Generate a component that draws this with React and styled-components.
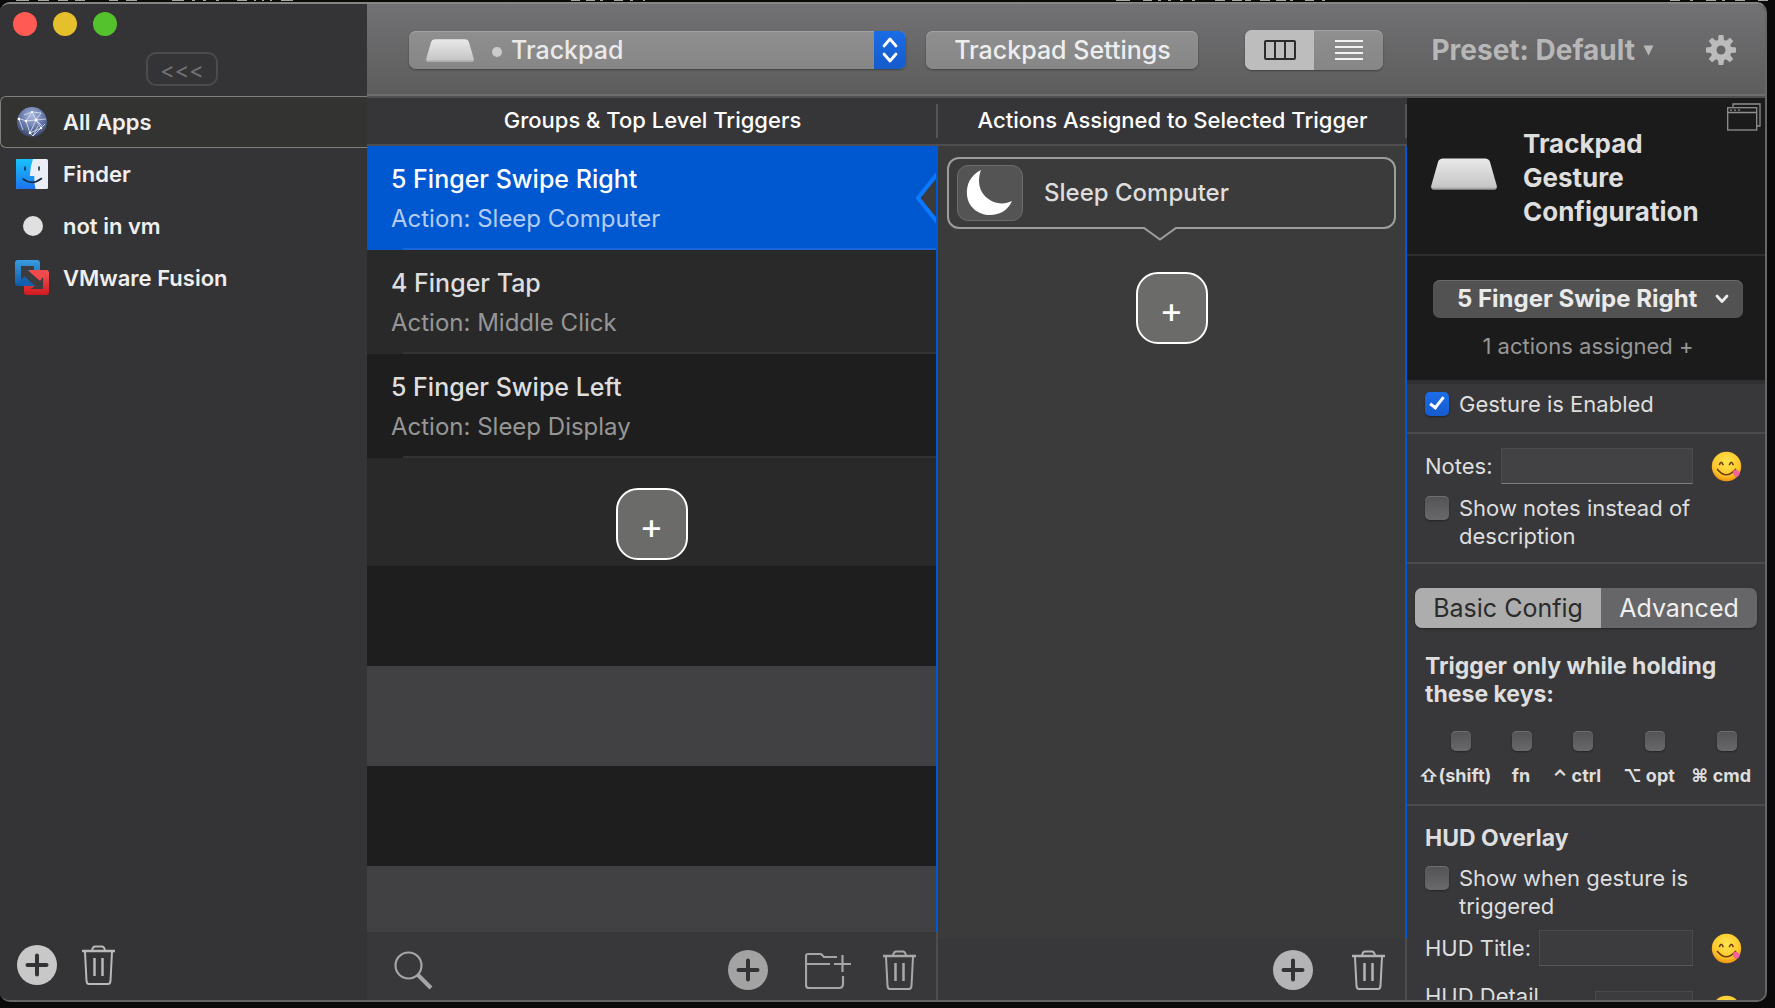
import React from "react";
import styled, { createGlobalStyle, css } from "styled-components";

const Global = createGlobalStyle`
  *, *::before, *::after { box-sizing: border-box; }
  body {
    margin: 0;
    background: #0a0a0a;
    color: #dedede;
    font-family: Inter, "DejaVu Sans", sans-serif;
    font-size: 22px;
    line-height: 28px;
    overflow: hidden;
  }
  button, input, select { font: inherit; color: inherit; margin: 0; }
  button { border: 0; padding: 0; background: none; }
  h2, h3, ul, p { margin: 0; padding: 0; font-size: inherit; font-weight: inherit; }
  ul { list-style: none; }
  svg { display: block; flex: none; }
`;

/* ---------- shell ---------- */

const Desktop = styled.div`
  height: 100vh;
  display: flex;
  flex-direction: column;
  padding-bottom: 6px;
`;

const Backdrop = styled.svg`
  width: 100%;
  height: 2px;
`;

const Window = styled.div`
  flex: 1;
  min-height: 0;
  margin-right: 8px;
  display: flex;
  border: solid #666668;
  border-width: 2px 2px 2px 0;
  border-top-color: #858583;
  border-radius: 10px;
  overflow: hidden;
  background: #373739;
`;

const Main = styled.main`
  flex: 1;
  min-width: 0;
  display: flex;
  flex-direction: column;
`;

const Columns = styled.div`
  flex: 1;
  min-height: 0;
  display: grid;
  grid-template-columns: minmax(0, 571fr) minmax(0, 469fr) 358px;
`;

/* ---------- sidebar ---------- */

const Sidebar = styled.aside`
  width: 367px;
  flex: none;
  display: flex;
  flex-direction: column;
  background: #343436;
`;

const TitleBar = styled.div`
  height: 92px;
  padding: 8px 3px 0 0;
`;

const Lights = styled.div`
  display: flex;
  gap: 16px;
  padding-left: 13px;
`;

const Light = styled.button`
  width: 24px;
  height: 24px;
  border-radius: 50%;
  background: ${(p) => p.$color};
`;

const CollapseButton = styled.button`
  display: block;
  width: 72px;
  height: 34px;
  margin: 16px auto 0;
  border: 2px solid #4b4b4d;
  border-radius: 10px;
  color: #747476;
  font-size: 22px;
  line-height: 32px;
`;

const AppRow = styled.button`
  display: flex;
  align-items: center;
  gap: 15px;
  width: 100%;
  height: 52px;
  padding-left: 15px;
  text-align: left;
  font-weight: 600;
  color: #efefef;
  border: 1px solid transparent;
  border-right: 0;
  border-radius: 6px 0 0 6px;
  ${(p) =>
    p.$selected &&
    css`
      border-color: #808082;
      background: #333332;
    `}
`;

const AppIcon = styled.span`
  width: 32px;
  display: flex;
  justify-content: center;
`;

const SidebarFooter = styled.footer`
  margin-top: auto;
  display: flex;
  align-items: center;
  gap: 25px;
  height: 70px;
  padding-left: 17px;
`;

/* ---------- toolbar ---------- */

const Toolbar = styled.header`
  display: flex;
  align-items: center;
  height: 94px;
  padding: 0 29px 0 42px;
  background: linear-gradient(#727274, #5c5c5d);
  border-bottom: 2px solid #4f4f51;
  box-shadow: inset 0 -2px #6e6e70;
`;

const raised = css`
  background: linear-gradient(#8f8f8f, #868686);
  box-shadow: 0 1px 2px rgba(0, 0, 0, 0.35), inset 0 1px #a3a3a3;
  border-radius: 7px;
`;

const DevicePicker = styled.label`
  ${raised}
  flex: 1;
  min-width: 0;
  height: 38px;
  display: flex;
  align-items: center;
  padding-left: 17px;
  overflow: hidden;
  color: #eaeaea;
`;

const Dot = styled.span`
  width: 10px;
  height: 10px;
  margin: 4px 9px 0 18px;
  border-radius: 50%;
  background: #cbcbcb;
`;

const BareSelect = styled.select`
  appearance: none;
  flex: 1;
  min-width: 0;
  height: 100%;
  border: 0;
  padding: 0;
  background: transparent;
  font-size: ${(p) => p.$size}px;
  font-weight: ${(p) => p.$weight};
`;

const Stepper = styled.span`
  width: 32px;
  height: 100%;
  display: flex;
  align-items: center;
  justify-content: center;
  background: linear-gradient(#1a6ce6, #155bcb);
`;

const SettingsButton = styled.button`
  ${raised}
  width: 272px;
  height: 38px;
  margin: 0 47px 0 20px;
  font-size: 25px;
  font-weight: 500;
  color: #eeeeee;
`;

const ViewSwitch = styled.div`
  ${raised}
  display: flex;
  width: 138px;
  height: 40px;
  overflow: hidden;
`;

const ViewButton = styled.button`
  flex: 1;
  display: flex;
  align-items: center;
  justify-content: center;
  background: ${(p) => (p.$on ? "#bdbdbd" : "transparent")};
`;

const PresetButton = styled.button`
  display: flex;
  align-items: center;
  gap: 8px;
  margin: 0 52px 0 48px;
  font-size: 28px;
  font-weight: 700;
  color: #b7b7b7;
`;

/* ---------- shared column parts ---------- */

const Column = styled.section`
  min-height: 0;
  display: flex;
  flex-direction: column;
`;

const ColumnTitle = styled.h2`
  position: relative;
  height: 48px;
  border-bottom: 2px solid #4e4e50;
  text-align: center;
  line-height: 44px;
  font-weight: 500;
  color: #ffffff;
  white-space: nowrap;
  background: #363638;
  &::after {
    content: "";
    position: absolute;
    right: 0;
    top: 6px;
    bottom: 6px;
    width: 2px;
    background: #555557;
  }
`;

const ColumnBody = styled.div`
  flex: 1;
  min-height: 0;
  overflow: hidden;
  border-right: 2px solid #0059d4;
  background: ${(p) => p.$bg};
`;

const ColumnFooter = styled.footer`
  flex: none;
  height: ${(p) => p.$height}px;
  display: flex;
  align-items: flex-end;
  padding: 0 20px 10px 27px;
  border-right: 2px solid #4d4d4f;
  background: #38383a;
`;

const IconButton = styled.button`
  margin-left: ${(p) => (p.$push ? "auto" : `${p.$before || 0}px`)};
`;

const AddButton = styled.button`
  display: block;
  width: 72px;
  height: 72px;
  margin: ${(p) => p.$top}px auto 0;
  border: 2px solid #ffffff;
  border-radius: 22px;
  background: #6b6b69;
  color: #ffffff;
  font-size: 36px;
  line-height: 72px;
`;

/* ---------- trigger list ---------- */

const Trigger = styled.button`
  position: relative;
  display: block;
  width: calc(100% + 2px);
  height: 104px;
  padding: 13px 0 11px 24px;
  text-align: left;
  line-height: 40px;
  background: ${(p) => p.$bg};
  border-right: 2px solid ${(p) => (p.$selected ? "#0a78ff" : "#0059d4")};
  &::after {
    content: "";
    position: absolute;
    left: 36px;
    right: 0;
    bottom: 0;
    height: 2px;
    background: ${(p) => (p.$selected ? "#1a66d8" : "#333335")};
  }
`;

const TriggerName = styled.span`
  display: block;
  font-size: 25px;
  font-weight: 500;
  color: ${(p) => (p.$selected ? "#ffffff" : "#dedede")};
`;

const TriggerAction = styled.span`
  display: block;
  font-size: 24px;
  color: ${(p) => (p.$selected ? "#b4cbf0" : "#969696")};
`;

const Notch = styled.svg`
  position: absolute;
  right: -2px;
  top: 26px;
`;

const Stripe = styled.li`
  height: ${(p) => p.$height}px;
  background: ${(p) => p.$bg};
  overflow: hidden;
`;

/* ---------- action list ---------- */

const ActionCard = styled.button`
  position: relative;
  display: flex;
  align-items: center;
  gap: 21px;
  width: calc(100% - 18px);
  height: 72px;
  margin: 11px 9px 0;
  padding-left: 8px;
  border: 2px solid #9d9d9f;
  border-radius: 12px;
  font-size: 24px;
  font-weight: 500;
`;

const ActionIcon = styled.span`
  width: 66px;
  height: 56px;
  display: flex;
  align-items: center;
  justify-content: center;
  border: 1px solid #6c6c6c;
  border-radius: 11px;
  background: #545454;
`;

const Pointer = styled.svg`
  position: absolute;
  left: calc(50% - 29px);
  top: 68px;
`;

/* ---------- configuration ---------- */

const Config = styled.section`
  min-height: 0;
  overflow: hidden;
  background: #38383a;
`;

const ConfigHead = styled.header`
  position: relative;
  display: flex;
  align-items: center;
  gap: 26px;
  height: 158px;
  padding: 0 58px 4px 24px;
  border-bottom: 2px solid #2e2e2e;
  background: #1b1b1b;
`;

const ConfigTitle = styled.h2`
  padding-top: 8px;
  font-size: 26px;
  line-height: 34px;
  font-weight: 700;
`;

const DetachButton = styled.button`
  position: absolute;
  right: 4px;
  top: 5px;
`;

const GestureBox = styled.div`
  padding: 24px 22px 20px 26px;
  border-bottom: 4px solid #303032;
  background: #1b1b1b;
`;

const GesturePicker = styled.label`
  display: flex;
  align-items: center;
  height: 38px;
  padding: 0 14px 0 24px;
  border-radius: 7px;
  background: #525252;
  box-shadow: inset 0 1px #6a6a6a;
  color: #eaeaea;
`;

const Assigned = styled.p`
  margin-top: 14px;
  text-align: center;
  color: #979797;
`;

const Section = styled.div`
  padding: ${(p) => p.$pad};
  border-bottom: 2px solid #4b4b4d;
`;

const CheckLabel = styled.label`
  display: flex;
  gap: 10px;
  margin-top: ${(p) => p.$top || 0}px;
  padding: 0 40px 0 18px;
`;

const Check = styled.input`
  appearance: none;
  flex: none;
  width: ${(p) => p.$size}px;
  height: ${(p) => p.$size}px;
  margin: 2px 0 0;
  border-radius: 5px;
  background: linear-gradient(#535355, #69696b);
  box-shadow: 0 1px 2px rgba(0, 0, 0, 0.35), inset 0 1px #6e6e70;
  &:checked {
    background: linear-gradient(#1b6dea, #165bcc);
    box-shadow: 0 1px 2px rgba(0, 0, 0, 0.4);
  }
  &:checked::after {
    content: "";
    display: block;
    width: 8px;
    height: 15px;
    margin: 2px 0 0 8px;
    border: solid #ffffff;
    border-width: 0 3px 3px 0;
    transform: rotate(38deg);
  }
`;

const FieldRow = styled.div`
  display: flex;
  align-items: ${(p) => p.$align || "center"};
  height: 36px;
  margin-top: ${(p) => p.$top || 0}px;
  padding: 0 23px 0 18px;
`;

const FieldLabel = styled.label`
  flex: none;
  min-width: ${(p) => p.$min || 0}px;
  margin-right: 8px;
`;

const Field = styled.input`
  flex: 1;
  min-width: 0;
  height: 36px;
  padding: 0 8px;
  border: 1px solid #4a4a4c;
  border-bottom: 1px solid ${(p) => (p.$lit ? "#7e7e80" : "#58585a")};
  background: ${(p) => (p.$lit ? "#424244" : "#3c3c3e")};
`;

const EmojiButton = styled.button`
  margin-left: 18px;
`;

const TallFieldRow = styled(FieldRow)`
  ${Field} { margin-top: 9px; }
  ${EmojiButton} { margin-top: 13px; }
`;

const Tabs = styled.div`
  display: flex;
  height: 40px;
  margin: 0 8px;
  border-radius: 7px;
  overflow: hidden;
  background: #666668;
  box-shadow: 0 1px 2px rgba(0, 0, 0, 0.4);
`;

const Tab = styled.button`
  flex: ${(p) => p.$grow};
  font-size: 25px;
  color: ${(p) => (p.$on ? "#2b2b2b" : "#efefef")};
  background: ${(p) => (p.$on ? "#adadad" : "transparent")};
`;

const Heading = styled.h3`
  margin-top: ${(p) => p.$top || 0}px;
  padding: 0 40px 0 18px;
  font-size: 23px;
  font-weight: 700;
`;

const Keys = styled.div`
  display: grid;
  grid-template-columns: 84fr 48fr 64fr 80fr 64fr;
  margin-top: 21px;
  padding: 0 12px 0 6px;
`;

const Key = styled.label`
  display: flex;
  flex-direction: column;
  align-items: center;
  gap: 13px;
  font-size: 18px;
  line-height: 24px;
  font-weight: 700;
  white-space: nowrap;
  input { margin-left: ${(p) => (p.$offset ? 12 : 2)}px; }
`;

/* ---------- drawings ---------- */

const TrackpadIcon = ({ w, h }) => (
  <svg width={w} height={h} viewBox="0 0 66 32" preserveAspectRatio="none">
    <defs>
      <linearGradient id="pad" x1="0" y1="0" x2="0" y2="1">
        <stop offset="0" stopColor="#e9e9e9" />
        <stop offset="1" stopColor="#c3c3c3" />
      </linearGradient>
    </defs>
    <path d="M12 0.5H54Q58 0.5 59 4L65.7 27.5Q66.5 31.5 63 31.5H3Q-0.5 31.5 0.3 27.5L7 4Q8 0.5 12 0.5Z" fill="url(#pad)" />
    <path d="M1 30.5H65" stroke="#a5a5a5" strokeWidth="1.5" />
  </svg>
);

const GlobeIcon = () => (
  <svg width="32" height="32" viewBox="0 0 32 32">
    <defs>
      <radialGradient id="globe" cx="0.5" cy="0.3" r="0.75">
        <stop offset="0" stopColor="#a9b9dd" />
        <stop offset="0.55" stopColor="#6475a6" />
        <stop offset="1" stopColor="#333c5c" />
      </radialGradient>
    </defs>
    <circle cx="16" cy="16" r="15" fill="url(#globe)" />
    <g fill="none" stroke="#e4ebfa" strokeWidth="0.9" opacity="0.85">
      <path d="M2 12L10 15L20 14L26 20M20 14L16 6L8 9M10 15L14 27L17 30L25 22L20 14L30 13M14 27L25 22L29 18M16 6L10 15M16 6L25 7M20 14L14 27M25 7L20 14M3 13L7 24M17 30L22 20" />
    </g>
    <g fill="#ffffff">
      <circle cx="10" cy="15" r="1.2" />
      <circle cx="20" cy="14" r="1.4" />
      <circle cx="14" cy="27" r="1.3" />
      <circle cx="25" cy="22" r="1.2" />
      <circle cx="16" cy="6" r="1.1" />
      <circle cx="3" cy="13" r="1.3" />
    </g>
  </svg>
);

const FinderIcon = () => (
  <svg width="32" height="32" viewBox="0 0 32 32">
    <defs>
      <linearGradient id="finder" x1="0" y1="0" x2="0" y2="1">
        <stop offset="0" stopColor="#19c3fb" />
        <stop offset="1" stopColor="#1b74ee" />
      </linearGradient>
    </defs>
    <rect y="1" width="32" height="30" rx="1.5" fill="#e9eef7" />
    <path d="M1.5 1H17Q14 9 13.8 18H18.3Q18 25 19.5 31H1.5Q0 31 0 29.5V2.5Q0 1 1.5 1Z" fill="url(#finder)" />
    <path d="M9 9V12M23 9V12" stroke="#1d2b40" strokeWidth="1.6" strokeLinecap="round" />
    <path d="M7 21Q16 28 25.5 20.5" fill="none" stroke="#1d2b40" strokeWidth="1.6" strokeLinecap="round" />
  </svg>
);

const BlankIcon = () => (
  <svg width="32" height="32" viewBox="0 0 32 32">
    <circle cx="17" cy="16" r="10" fill="#e0e0e0" />
  </svg>
);

const VMwareIcon = () => (
  <svg width="34" height="36" viewBox="0 0 34 36">
    <defs>
      <linearGradient id="vmb" x1="0" y1="0" x2="0" y2="1">
        <stop offset="0" stopColor="#3a9ce0" />
        <stop offset="1" stopColor="#0e5aa3" />
      </linearGradient>
      <linearGradient id="vmr" x1="0" y1="0" x2="0" y2="1">
        <stop offset="0" stopColor="#f85555" />
        <stop offset="1" stopColor="#cf1a20" />
      </linearGradient>
    </defs>
    <rect x="9" y="10" width="25" height="25" rx="3" fill="url(#vmr)" />
    <path d="M3 0H22Q25 0 25 3V10H14L21 26H3Q0 26 0 23V3Q0 0 3 0Z" fill="url(#vmb)" />
    <path d="M14 10H31V16H28V23L20 16Z" fill="#f04a4a" />
    <path d="M6 6H19V10H12.5L25 21L28 17V29H15.500L20 26L9.500 16.500L6 20Z" fill="#3c3c3e" />
    <path d="M6 20L9.500 16.500L20 26H6Z" fill="#1361ac" />
  </svg>
);

const PlusDisc = ({ fill = "#b4b4b6" }) => (
  <svg width="40" height="40" viewBox="0 0 40 40">
    <circle cx="20" cy="20" r="20" fill={fill} />
    <path d="M20 10.5V29.5M10.5 20H29.5" stroke="#333335" strokeWidth="4" strokeLinecap="round" />
  </svg>
);

const TrashIcon = ({ stroke = "#a9a9a9" }) => (
  <svg width="33" height="40" viewBox="0 0 33 40" fill="none" stroke={stroke} strokeWidth="2">
    <path d="M0 6H33" strokeWidth="2.5" />
    <path d="M10 5Q11 1.5 13 1.5H20Q22 1.5 23 5" />
    <path d="M3 7L4.5 36Q5 39 7 39H26Q28 39 28.5 36L30 7" />
    <path d="M12.5 13V31M20.500 13V31" strokeWidth="2.5" />
  </svg>
);

const SearchIcon = () => (
  <svg width="40" height="40" viewBox="0 0 40 40" fill="none" stroke="#a5a5a5">
    <circle cx="14.5" cy="15.5" r="13" strokeWidth="2.2" />
    <path d="M24 25L37 38" strokeWidth="4" />
  </svg>
);

const FolderPlusIcon = () => (
  <svg width="46" height="38" viewBox="0 0 46 38" fill="none" stroke="#a5a5a5" strokeWidth="2.2">
    <path d="M32 5H19L16 2H3Q1 2 1 4V33Q1 36 4 36H34Q38 36 38 32V24" />
    <path d="M1 12H25M29 12H46M37.5 3V20" />
  </svg>
);

const GearIcon = () => (
  <svg width="30" height="30" viewBox="-15 -15 30 30">
    <g fill="#bbbbbb">
      {[0, 45, 90, 135].map((a) => (
        <path key={a} d="M-2.4 -15H2.4L3.2 -8V8L2.4 15H-2.4L-3.2 8V-8Z" transform={`rotate(${a})`} />
      ))}
      <circle r="10.5" />
    </g>
    <circle r="4.5" fill="#666668" />
  </svg>
);

const MoonIcon = () => (
  <svg width="48" height="48" viewBox="0 0 48 48">
    <path d="M15 1C5 6 0 15 1 26C2 38 12 46 24 46C34 46 42 41 46 32C36 37 25 34 18 26C12 19 12 9 15 1Z" fill="#ffffff" />
  </svg>
);

const YumIcon = () => (
  <svg width="31" height="31" viewBox="0 0 31 31">
    <defs>
      <radialGradient id="yum" cx="0.5" cy="0.35" r="0.65">
        <stop offset="0" stopColor="#ffe650" />
        <stop offset="0.7" stopColor="#fdc62b" />
        <stop offset="1" stopColor="#ee9310" />
      </radialGradient>
    </defs>
    <circle cx="15.5" cy="15.500" r="14.7" fill="url(#yum)" />
    <g fill="none" stroke="#6d3d0c" strokeWidth="1.7" strokeLinecap="round">
      <path d="M8.5 13.5Q10 9 12 13.5M18.5 13.5Q20.5 9 22 13.5" />
      <path d="M6.5 18.5Q15 29 24.5 18.5" />
    </g>
    <path d="M22 20Q26 17 28.5 21.5Q29 25.500 25 25.5Q22 25 22 20Z" fill="#f5609b" />
  </svg>
);

const WindowsIcon = () => (
  <svg width="34" height="28" viewBox="0 0 34 28" fill="none" stroke="#8f8f8f" strokeWidth="1.3">
    <path d="M6 4V1H33V23H30" />
    <rect x="0.7" y="4.7" width="29" height="22.3" />
    <path d="M0.7 9.5H29.7" />
    <path d="M3 7.2H14" strokeDasharray="2 2" />
  </svg>
);

/* Tips of the terminal text that show above the window. */
const marks = [
  [16, 13], [38, 11], [58, 10], [75, 10], [109, 9], [126, 11], [172, 12], [192, 3], [203, 3], [216, 3],
  [237, 10], [254, 2], [262, 2], [270, 2], [281, 12], [571, 9], [586, 9], [600, 3], [614, 9], [630, 3], [643, 2],
  [1116, 14], [1143, 9], [1158, 3], [1168, 3], [1180, 3], [1192, 3], [1215, 10], [1232, 10], [1245, 6], [1260, 10],
  [1276, 10], [1290, 3], [1305, 9], [1322, 3], [1670, 10], [1690, 3], [1706, 10], [1722, 3], [1735, 10], [1758, 10],
];

const apps = [
  { name: "All Apps", Icon: GlobeIcon, selected: true },
  { name: "Finder", Icon: FinderIcon },
  { name: "not in vm", Icon: BlankIcon },
  { name: "VMware Fusion", Icon: VMwareIcon },
];

const triggers = [
  { name: "5 Finger Swipe Right", action: "Action: Sleep Computer", bg: "#0058d1", selected: true },
  { name: "4 Finger Tap", action: "Action: Middle Click", bg: "#292929" },
  { name: "5 Finger Swipe Left", action: "Action: Sleep Display", bg: "#1e1e1e" },
];

const keys = ["⇧(shift)", "fn", "⌃ ctrl", "⌥ opt", "⌘ cmd"];

export default function App() {
  return (
    <Desktop>
      <Global />
      <Backdrop viewBox="0 0 1775 2" preserveAspectRatio="none">
        {marks.map(([x, w]) => (
          <rect key={x} x={x} width={w} height="1" fill="#a8a8a0" />
        ))}
      </Backdrop>
      <Window>
        <Sidebar>
          <TitleBar>
            <Lights>
              <Light $color="#ff5b54" aria-label="Close" />
              <Light $color="#e6bf2c" aria-label="Minimise" />
              <Light $color="#53c22c" aria-label="Zoom" />
            </Lights>
            <CollapseButton>&lt;&lt;&lt;</CollapseButton>
          </TitleBar>
          <nav>
            {apps.map(({ name, Icon, selected }) => (
              <AppRow key={name} $selected={selected}>
                <AppIcon><Icon /></AppIcon>
                {name}
              </AppRow>
            ))}
          </nav>
          <SidebarFooter>
            <IconButton aria-label="Add app"><PlusDisc fill="#c8c8c8" /></IconButton>
            <IconButton aria-label="Delete app"><TrashIcon stroke="#b9b9b9" /></IconButton>
          </SidebarFooter>
        </Sidebar>

        <Main>
          <Toolbar>
            <DevicePicker>
              <TrackpadIcon w={48} h={23} />
              <Dot />
              <BareSelect $size={25} $weight={500} aria-label="Device">
                <option>Trackpad</option>
              </BareSelect>
              <Stepper>
                <svg width="16" height="26" viewBox="0 0 16 26" fill="none" stroke="#ffffff" strokeWidth="2.8" strokeLinecap="round" strokeLinejoin="round">
                  <path d="M2 9L8 2L14 9M2 17L8 24L14 17" />
                </svg>
              </Stepper>
            </DevicePicker>
            <SettingsButton>Trackpad Settings</SettingsButton>
            <ViewSwitch>
              <ViewButton $on aria-label="Column view">
                <svg width="32" height="20" viewBox="0 0 32 20" fill="none" stroke="#2b2b2b" strokeWidth="2">
                  <rect x="1" y="1" width="30" height="18" rx="1" />
                  <path d="M11 1V19M21 1V19" />
                </svg>
              </ViewButton>
              <ViewButton aria-label="List view">
                <svg width="28" height="20" viewBox="0 0 28 20" stroke="#f2f2f2" strokeWidth="2">
                  <path d="M0 1H28M0 7H28M0 13H28M0 19H28" />
                </svg>
              </ViewButton>
            </ViewSwitch>
            <PresetButton>
              Preset: Default
              <svg width="11" height="11" viewBox="0 0 11 11"><path d="M0.5 0.5H10.5L5.5 10.5Z" fill="#b7b7b7" /></svg>
            </PresetButton>
            <IconButton aria-label="Settings"><GearIcon /></IconButton>
          </Toolbar>

          <Columns>
            <Column>
              <ColumnTitle>Groups &amp; Top Level Triggers</ColumnTitle>
              <ColumnBody as="ul" $bg="#414143">
                {triggers.map((t) => (
                  <li key={t.name}>
                    <Trigger $bg={t.bg} $selected={t.selected}>
                      <TriggerName $selected={t.selected}>{t.name}</TriggerName>
                      <TriggerAction $selected={t.selected}>{t.action}</TriggerAction>
                      {t.selected && (
                        <Notch width="24" height="52" viewBox="0 0 24 52">
                          <path d="M24 0L4 26L24 52Z" fill="#3b3b3b" />
                          <path d="M24 1L4 26L24 51" fill="none" stroke="#0a78ff" strokeWidth="4" />
                        </Notch>
                      )}
                    </Trigger>
                  </li>
                ))}
                <Stripe $height={108} $bg="#292929">
                  <AddButton $top={30} aria-label="Add trigger">+</AddButton>
                </Stripe>
                <Stripe $height={100} $bg="#1e1e1e" />
                <Stripe $height={100} $bg="#414143" />
                <Stripe $height={100} $bg="#1e1e1e" />
              </ColumnBody>
              <ColumnFooter $height={68}>
                <IconButton aria-label="Search"><SearchIcon /></IconButton>
                <IconButton $push aria-label="Add trigger"><PlusDisc fill="#a3a3a3" /></IconButton>
                <IconButton $before={37} aria-label="New group"><FolderPlusIcon /></IconButton>
                <IconButton $before={32} aria-label="Delete trigger"><TrashIcon /></IconButton>
              </ColumnFooter>
            </Column>

            <Column>
              <ColumnTitle>Actions Assigned to Selected Trigger</ColumnTitle>
              <ColumnBody $bg="#3b3b3b">
                <ActionCard>
                  <ActionIcon><MoonIcon /></ActionIcon>
                  Sleep Computer
                  <Pointer width="34" height="14" viewBox="0 0 34 14">
                    <path d="M1 0L17 12L33 0Z" fill="#3b3b3b" />
                    <path d="M0 1H1L17 12.5L33 1H34" fill="none" stroke="#9d9d9f" strokeWidth="2" />
                  </Pointer>
                </ActionCard>
                <AddButton $top={43} aria-label="Add action">+</AddButton>
              </ColumnBody>
              <ColumnFooter $height={62}>
                <IconButton $push aria-label="Add action"><PlusDisc /></IconButton>
                <IconButton $before={39} aria-label="Delete action"><TrashIcon stroke="#b4b4b6" /></IconButton>
              </ColumnFooter>
            </Column>

            <Config>
              <ConfigHead>
                <TrackpadIcon w={66} h={32} />
                <ConfigTitle>Trackpad Gesture Configuration</ConfigTitle>
                <DetachButton aria-label="Open in window"><WindowsIcon /></DetachButton>
              </ConfigHead>
              <GestureBox>
                <GesturePicker>
                  <BareSelect $size={24} $weight={700} aria-label="Gesture">
                    <option>5 Finger Swipe Right</option>
                  </BareSelect>
                  <svg width="14" height="10" viewBox="0 0 14 10" fill="none" stroke="#eaeaea" strokeWidth="2.8" strokeLinecap="round" strokeLinejoin="round">
                    <path d="M2 2L7 7.5L12 2" />
                  </svg>
                </GesturePicker>
                <Assigned>1 actions assigned +</Assigned>
              </GestureBox>

              <Section $pad="6px 0 14px">
                <CheckLabel>
                  <Check type="checkbox" $size={24} defaultChecked />
                  Gesture is Enabled
                </CheckLabel>
              </Section>

              <Section $pad="14px 0 12px">
                <FieldRow>
                  <FieldLabel htmlFor="notes">Notes:</FieldLabel>
                  <Field id="notes" $lit />
                  <EmojiButton aria-label="Emoji"><YumIcon /></EmojiButton>
                </FieldRow>
                <CheckLabel $top={10}>
                  <Check type="checkbox" $size={24} />
                  Show notes instead of description
                </CheckLabel>
              </Section>

              <Section $pad="24px 0 16px">
                <Tabs>
                  <Tab $grow={186} $on>Basic Config</Tab>
                  <Tab $grow={156}>Advanced</Tab>
                </Tabs>
                <Heading $top={24}>Trigger only while holding these keys:</Heading>
                <Keys>
                  {keys.map((k) => (
                    <Key key={k} $offset={k !== "fn"}>
                      <Check type="checkbox" $size={20} />
                      {k}
                    </Key>
                  ))}
                </Keys>
              </Section>

              <Section $pad="18px 0 0">
                <Heading>HUD Overlay</Heading>
                <CheckLabel $top={12}>
                  <Check type="checkbox" $size={24} />
                  Show when gesture is triggered
                </CheckLabel>
                <FieldRow $top={10}>
                  <FieldLabel htmlFor="hud-title">HUD Title:</FieldLabel>
                  <Field id="hud-title" />
                  <EmojiButton aria-label="Emoji"><YumIcon /></EmojiButton>
                </FieldRow>
                <TallFieldRow $top={16} $align="flex-start">
                  <FieldLabel htmlFor="hud-detail" $min={162}>HUD Detail</FieldLabel>
                  <Field id="hud-detail" />
                  <EmojiButton aria-label="Emoji"><YumIcon /></EmojiButton>
                </TallFieldRow>
              </Section>
            </Config>
          </Columns>
        </Main>
      </Window>
    </Desktop>
  );
}
